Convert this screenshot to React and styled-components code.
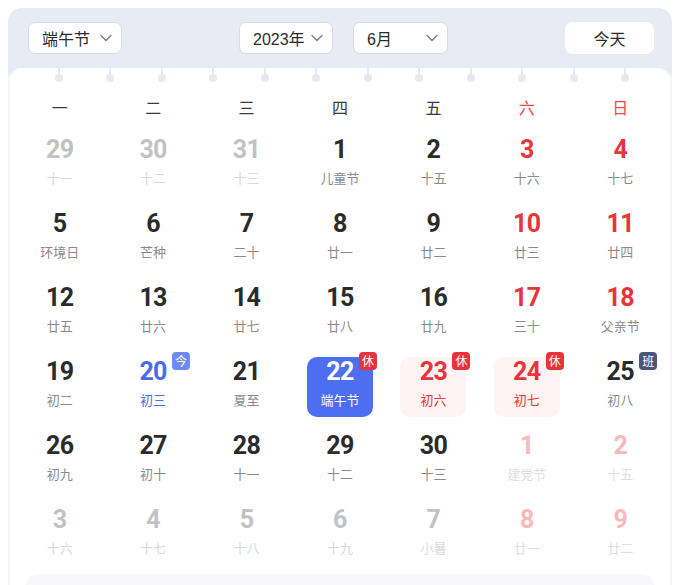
import React from 'react';
import styled, { createGlobalStyle } from 'styled-components';

const GlobalStyle = createGlobalStyle`
  html, body {
    margin: 0;
    padding: 0;
    background: #fff;
  }
  body {
    font-family: 'Liberation Sans', 'Noto Sans CJK SC', sans-serif;
  }
`;

const Page = styled.div`
  padding: 8px 8px 0;
`;

const Calendar = styled.div`
  background: #e8ebf3;
  border-radius: 14px 14px 0 0;
  overflow: hidden;
`;

const Toolbar = styled.div`
  display: flex;
  align-items: center;
  justify-content: space-between;
  height: 60px;
  padding: 0 18px 0 20px;
`;

const Group = styled.div`
  display: flex;
  gap: 20px;
`;

const Select = styled.div`
  display: flex;
  align-items: center;
  justify-content: space-between;
  box-sizing: border-box;
  width: ${({ w }) => w}px;
  height: 32px;
  padding: 0 9px 0 13px;
  background: #fff;
  border: 1px solid #d8dbe4;
  border-radius: 7px;
  font-size: 16px;
  color: #2b2b2b;
`;

const TodayButton = styled.button`
  width: 89px;
  height: 32px;
  border: none;
  border-radius: 8px;
  background: #fff;
  font-family: inherit;
  font-size: 16px;
  color: #2b2b2b;
  cursor: pointer;
`;

const Card = styled.div`
  background: #fff;
  border-radius: 14px 14px 0 0;
  box-shadow: inset 2px 0 0 #f5f6f8, inset -2px 0 0 #f5f6f8;
  padding: 0 5px 10px;
`;

const Rings = styled.div`
  display: grid;
  grid-template-columns: repeat(12, 1fr);
  margin: 0 16px 0 20px;
  height: 14px;
`;

const Ring = styled.div`
  position: relative;
  display: flex;
  justify-content: center;

  &::before {
    content: '';
    width: 2px;
    height: 8px;
    background: #e6e9f1;
  }

  &::after {
    content: '';
    position: absolute;
    top: 6px;
    left: 50%;
    width: 8px;
    height: 8px;
    margin-left: -4px;
    border-radius: 50%;
    background: #e6e9f1;
  }
`;

const Weekdays = styled.div`
  display: grid;
  grid-template-columns: repeat(7, 1fr);
  height: 36px;
  margin-top: 7px;
  align-items: center;
`;

const Weekday = styled.div`
  text-align: center;
  font-size: 16px;
  font-family: 'Noto Sans CJK SC', sans-serif;
  color: ${({ weekend }) => (weekend ? '#ef4848' : '#3a3a3a')};
`;

const Grid = styled.div`
  display: grid;
  grid-template-columns: repeat(7, 1fr);
  row-gap: 14px;
  margin-top: 10px;
`;

const CellWrap = styled.div`
  display: flex;
  justify-content: center;
`;

const palette = {
  normal: { num: '#2b2b2b', lunar: '#8a8a8a' },
  weekend: { num: '#e8353b', lunar: '#8a8a8a' },
  faded: { num: '#c2c2c2', lunar: '#d9d9d9' },
  fadedWeekend: { num: '#f7b9b9', lunar: '#dedede' },
  today: { num: '#4a6bf0', lunar: '#4a6bf0' },
  selected: { num: '#fff', lunar: '#fff' },
  rest: { num: '#e8353b', lunar: '#e8353b' },
};

const Cell = styled.div`
  position: relative;
  width: 66px;
  height: 60px;
  box-sizing: border-box;
  padding-top: 2px;
  border-radius: 10px;
  text-align: center;
  background: ${({ kind }) =>
    kind === 'selected' ? '#4e6ef2' : kind === 'rest' ? '#fdf4f3' : 'transparent'};
`;

const Num = styled.div`
  font-family: Roboto, 'DejaVu Sans', sans-serif;
  font-weight: 700;
  font-size: 25px;
  line-height: 26px;
  letter-spacing: -0.6px;
  color: ${({ kind }) => palette[kind].num};
`;

const Lunar = styled.div`
  margin-top: 7px;
  font-family: 'Noto Sans CJK SC', sans-serif;
  font-size: 13px;
  line-height: 16px;
  color: ${({ kind }) => palette[kind].lunar};
`;

const badgeColors = { 休: '#e8333a', 班: '#4b5574', 今: '#6d8af5' };

const Badge = styled.span`
  position: absolute;
  top: -5px;
  right: -4px;
  width: 18px;
  height: 18px;
  border-radius: 4px;
  background: ${({ label }) => badgeColors[label]};
  color: #fff;
  font-family: 'Noto Sans CJK SC', sans-serif;
  font-size: 12px;
  line-height: 18px;
  text-align: center;
`;

const Footer = styled.div`
  height: 40px;
  margin: 9px 13px 0;
  background: #f8f8fa;
  border-radius: 12px;
`;

const Chevron = () => (
  <svg width="12" height="8" viewBox="0 0 12 8" fill="none">
    <path d="M1 1.5l5 5 5-5" stroke="#767b8a" strokeWidth="1.3" strokeLinecap="round" strokeLinejoin="round" />
  </svg>
);

const weekdays = ['一', '二', '三', '四', '五', '六', '日'];

// [day, lunar, kind, badge]
const days = [
  [29, '十一', 'faded'], [30, '十二', 'faded'], [31, '十三', 'faded'], [1, '儿童节', 'normal'], [2, '十五', 'normal'], [3, '十六', 'weekend'], [4, '十七', 'weekend'],
  [5, '环境日', 'normal'], [6, '芒种', 'normal'], [7, '二十', 'normal'], [8, '廿一', 'normal'], [9, '廿二', 'normal'], [10, '廿三', 'weekend'], [11, '廿四', 'weekend'],
  [12, '廿五', 'normal'], [13, '廿六', 'normal'], [14, '廿七', 'normal'], [15, '廿八', 'normal'], [16, '廿九', 'normal'], [17, '三十', 'weekend'], [18, '父亲节', 'weekend'],
  [19, '初二', 'normal'], [20, '初三', 'today', '今'], [21, '夏至', 'normal'], [22, '端午节', 'selected', '休'], [23, '初六', 'rest', '休'], [24, '初七', 'rest', '休'], [25, '初八', 'normal', '班'],
  [26, '初九', 'normal'], [27, '初十', 'normal'], [28, '十一', 'normal'], [29, '十二', 'normal'], [30, '十三', 'normal'], [1, '建党节', 'fadedWeekend'], [2, '十五', 'fadedWeekend'],
  [3, '十六', 'faded'], [4, '十七', 'faded'], [5, '十八', 'faded'], [6, '十九', 'faded'], [7, '小暑', 'faded'], [8, '廿一', 'fadedWeekend'], [9, '廿二', 'fadedWeekend'],
];

const App = () => (
  <Page>
    <GlobalStyle />
    <Calendar>
      <Toolbar>
        <Select w={94}>
          端午节
          <Chevron />
        </Select>
        <Group>
          <Select w={94}>
            2023年
            <Chevron />
          </Select>
          <Select w={95}>
            6月
            <Chevron />
          </Select>
        </Group>
        <TodayButton>今天</TodayButton>
      </Toolbar>
      <Card>
        <Rings>
          {Array.from({ length: 12 }, (_, i) => (
            <Ring key={i} />
          ))}
        </Rings>
        <Weekdays>
          {weekdays.map((w, i) => (
            <Weekday key={w} weekend={i > 4}>
              {w}
            </Weekday>
          ))}
        </Weekdays>
        <Grid>
          {days.map(([d, lunar, kind, badge], i) => (
            <CellWrap key={i}>
              <Cell kind={kind}>
                <Num kind={kind}>{d}</Num>
                <Lunar kind={kind}>{lunar}</Lunar>
                {badge && <Badge label={badge}>{badge}</Badge>}
              </Cell>
            </CellWrap>
          ))}
        </Grid>
        <Footer />
      </Card>
    </Calendar>
  </Page>
);

export default App;
